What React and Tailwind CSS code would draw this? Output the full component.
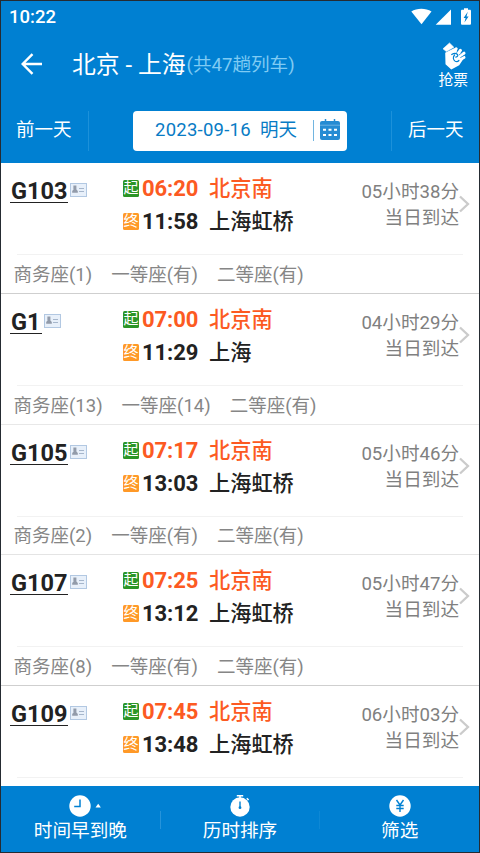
const trains = [
  { no: 'G103', depart: '06:20', from: '北京南', arrive: '11:58', to: '上海虹桥', hours: '05', minutes: '38', seats: ['商务座(1)', '一等座(有)', '二等座(有)'], size: 'h-[131px]', line: 'border-[#cfcfcf]' },
  { no: 'G1', depart: '07:00', from: '北京南', arrive: '11:29', to: '上海', hours: '04', minutes: '29', seats: ['商务座(13)', '一等座(14)', '二等座(有)'], size: 'h-[131px]', line: 'border-[#e8e8e8]' },
  { no: 'G105', depart: '07:17', from: '北京南', arrive: '13:03', to: '上海虹桥', hours: '05', minutes: '46', seats: ['商务座(2)', '一等座(有)', '二等座(有)'], size: 'h-[130px]', line: 'border-[#e4e4e4]' },
  { no: 'G107', depart: '07:25', from: '北京南', arrive: '13:12', to: '上海虹桥', hours: '05', minutes: '47', seats: ['商务座(8)', '一等座(有)', '二等座(有)'], size: 'h-[131px]', line: 'border-[#cfcfcf]' },
  { no: 'G109', depart: '07:45', from: '北京南', arrive: '13:48', to: '上海虹桥', hours: '06', minutes: '03', seats: [], size: 'h-[100px]', line: 'border-transparent' },
];

function StatusBar() {
  return (
    <div className="flex h-[29px] items-center justify-between pl-2 pr-[7px] pt-[2px]">
      <span className="pt-px text-[18.5px] font-medium leading-none">10:22</span>
      <svg width="62" height="20" viewBox="0 0 62 20" fill="#fff">
        <path d="M1.3 4.5C6.8.8 15.8.8 21.5 4.5L11.5 17.3Z" />
        <path d="M25.7 17.7H41V2.4Z" />
        <path d="M54 1.2h4v1.6h1.7c.8 0 1.3.5 1.3 1.2v12.5c0 .8-.5 1.3-1.3 1.3h-7.4c-.8 0-1.3-.5-1.3-1.3V4c0-.7.5-1.2 1.3-1.2H54Z" />
        <path d="M57.8 4.8 53.6 11h2l-1.2 4.5 4.2-6.1h-2.1Z" fill="#0080d2" />
      </svg>
    </div>
  );
}

function FistIcon() {
  return (
    <svg width="26" height="28" viewBox="0 0 26 28">
      <path d="M1 6.8 7.5 1l4.3 4.2-7.4 4.4Z" fill="#fff" stroke="#fff" strokeWidth=".6" strokeLinejoin="round" />
      <path d="M3.2 10.8 12.5 6l3 3.5 4 1.5 2.2 5.5-4.5 6.7-7.9 4.3-5.8-5.2Z" fill="#fff" />
      <g fill="none" stroke="#fff" strokeWidth="3" strokeLinecap="round">
        <path d="m14.2 6.8-2.2 4M18.5 8.3l-3.2 4M22 11.2l-4.3 3M22 15.4l-5 2.5" />
      </g>
      <g fill="none" stroke="#0080d2" strokeLinecap="round">
        <path d="M9.7 12.5c2-1.4 4.4-1.5 5.8 0 1 1.2-.3 2.4-1.7 2.7M12.5 13c-1.8 2.2-1.4 5.1.7 6.2 1.3.6 2.8.3 3.7-.7" strokeWidth="1.2" />
        <path d="m15.8 8.6-1 1.8M19.9 10.6l-2.5 2.1M22.2 13.5l-3.5 1.9" strokeWidth=".8" />
      </g>
    </svg>
  );
}

function CalendarIcon() {
  return (
    <svg width="20" height="21" viewBox="0 0 20 21">
      <rect y="2" width="20" height="19" rx="2" fill="#258bd3" />
      <path d="M0 6.2h20" stroke="#7fbce6" strokeWidth=".8" />
      <path d="M5.5 0v4M14.5 0v4" stroke="#258bd3" strokeWidth="1.5" />
      <path d="M3 10.8h3m2.5 0h3m2.5 0h3M3 16h3m2.5 0h3m2.5 0h3" stroke="#fff" strokeWidth="2" />
    </svg>
  );
}

function IdCardIcon() {
  return (
    <svg width="17" height="14" viewBox="0 0 17 14">
      <rect x=".5" y=".5" width="16" height="13" fill="#e8f0fa" stroke="#b2c8e2" />
      <path d="M3.4 2.5h3v3.8h-3ZM2.2 9.8V8L4 6h2l1.8 2v1.8Z" fill="#929baa" />
      <path d="M9 5.5H14M9 8.5H14" stroke="#a6b6cb" />
    </svg>
  );
}

function Train({ train }) {
  return (
    <section className={`flex flex-col border-b ${train.size} ${train.line}`}>
      <div className="flex h-[91px] shrink-0">
        <div className="flex w-[122px] items-start pl-[9px] pt-[15px]">
          <div className="flex h-[25px] items-center border-b border-[#222] px-px pt-[3px] text-[23.5px] font-bold leading-none text-[#222]">
            {train.no}
          </div>
          <span className="ml-[2px] mt-[5px]"><IdCardIcon /></span>
        </div>
        <div className="pt-[9px]">
          <div className="flex h-[33px] items-center text-[#fc5a22]">
            <span className="flex h-[17px] w-[16px] items-center justify-center rounded-[1.5px] bg-[#2c9527] text-[15px] leading-none text-white">起</span>
            <span className="ml-[3px] w-[67px] text-[22px] font-bold -tracking-[0.1px]">{train.depart}</span>
            <span className="text-[21.2px] font-medium">{train.from}</span>
          </div>
          <div className="flex h-[33px] items-center text-[#222]">
            <span className="flex h-[17px] w-[16px] items-center justify-center rounded-[1.5px] bg-[#ff9927] text-[15px] leading-none text-white">终</span>
            <span className="ml-[3px] w-[67px] text-[22px] font-bold -tracking-[0.1px]">{train.arrive}</span>
            <span className="text-[21.2px] font-medium">{train.to}</span>
          </div>
        </div>
        <div className="ml-auto flex pr-[9px] pt-[17px] text-[#808080]">
          <div className="text-right text-[18.6px] leading-[25.5px]">
            <p>{train.hours}小时{train.minutes}分</p>
            <p>当日到达</p>
          </div>
          <svg className="mt-[15px]" width="11" height="18" viewBox="0 0 11 18">
            <path d="m1 1.5 8 7.5-8 7.5" fill="none" stroke="#cbcbcb" strokeWidth="2.3" />
          </svg>
        </div>
      </div>
      <div className="mx-[16px] h-px shrink-0 bg-[#f2f2f2]" />
      <div className="flex flex-1 items-center gap-[19px] pl-[12.5px] pt-[3px] text-[18.5px] text-[#868686]">
        {train.seats.map((seat) => <span key={seat}>{seat}</span>)}
      </div>
    </section>
  );
}

function FooterItem({ label, children }) {
  return (
    <button className="flex flex-1 flex-col items-center pt-[9px]">
      <span className="flex h-[23px] items-start">{children}</span>
      <span className="text-[18.6px] leading-[26px]">{label}</span>
    </button>
  );
}

export default function App() {
  return (
    <div className="flex h-[853px] w-[480px] flex-col overflow-hidden border border-[#252b32] bg-white font-['Roboto','Noto_Sans_CJK_SC',sans-serif]" lang="zh-CN">
      <header className="h-[162px] shrink-0 bg-[#0080d2] text-white">
        <StatusBar />
        <div className="flex h-[68px] items-center">
          <svg className="ml-[20px] shrink-0" width="22" height="22" viewBox="0 0 22 22">
            <path d="M21 11H2M11.5 1.2 1.7 11l9.8 9.8" fill="none" stroke="#fff" strokeWidth="2.4" />
          </svg>
          <h1 className="ml-[29px] whitespace-nowrap pt-[3px] text-[23.8px] font-normal">北京 - 上海</h1>
          <span className="ml-px whitespace-nowrap pt-[3px] text-[18.6px] text-[#7fcbf3]">(共47趟列车)</span>
          <div className="ml-auto mr-[11px] flex flex-col items-center pt-[3px]">
            <span className="ml-[3px]"><FistIcon /></span>
            <span className="text-[14.8px] leading-[20px]">抢票</span>
          </div>
        </div>
        <div className="flex h-[65px] items-center text-[18.5px]">
          <div className="flex h-[40px] w-[88px] items-center border-r border-[#1c91da] pl-[15px]">前一天</div>
          <div className="mx-[44px] flex h-[40px] w-[214px] items-center rounded-[4px] bg-white pl-[22px] text-[#087bc5]">
            <span className="tracking-[0.25px]">2023-09-16</span>
            <span className="ml-[9px]">明天</span>
            <span className="ml-auto h-[21px] w-px bg-[#72b5e0]" />
            <span className="ml-[6px] mr-[7px] -mt-[2px]"><CalendarIcon /></span>
          </div>
          <div className="flex h-[40px] flex-1 items-center border-l border-[#1c91da] pl-[16px]">后一天</div>
        </div>
      </header>
      <main className="h-[623px] shrink-0 overflow-hidden">
        {trains.map((train) => <Train key={train.no} train={train} />)}
      </main>
      <footer className="flex flex-1 bg-[#0080d2] text-white">
        <FooterItem label="时间早到晚">
          <svg className="ml-[9px]" width="32" height="22" viewBox="0 0 32 22">
            <circle cx="11" cy="11" r="10.7" fill="#fff" />
            <path d="M11 4.5v7H5.2" fill="none" stroke="#0080d2" strokeWidth="1.5" />
            <path d="m26.5 12.5 2.7-3.8 2.7 3.8Z" fill="#fff" />
          </svg>
        </FooterItem>
        <div className="mt-[25px] h-[18px] w-px bg-[#2694db]" />
        <FooterItem label="历时排序">
          <svg width="22" height="22" viewBox="0 0 22 22">
            <circle cx="11" cy="12" r="9.7" fill="#fff" />
            <path d="M7.8.8h6.4M11 .8v3M17.8 3.2l1.8 1.8" stroke="#fff" strokeWidth="1.5" />
            <path d="M11 6.5v6" stroke="#0080d2" strokeWidth="1.4" />
            <circle cx="11" cy="12.7" r="1.4" fill="#0080d2" />
          </svg>
        </FooterItem>
        <div className="mt-[25px] h-[18px] w-px bg-[#0e88d5]" />
        <FooterItem label="筛选">
          <svg width="22" height="22" viewBox="0 0 22 22">
            <circle cx="11" cy="11" r="10.7" fill="#fff" />
            <path d="m7.5 5 3.5 5 3.5-5M11 10v7M7.3 10.5h7.4M7.3 13.5h7.4" fill="none" stroke="#0080d2" strokeWidth="1.4" />
          </svg>
        </FooterItem>
      </footer>
    </div>
  );
}
